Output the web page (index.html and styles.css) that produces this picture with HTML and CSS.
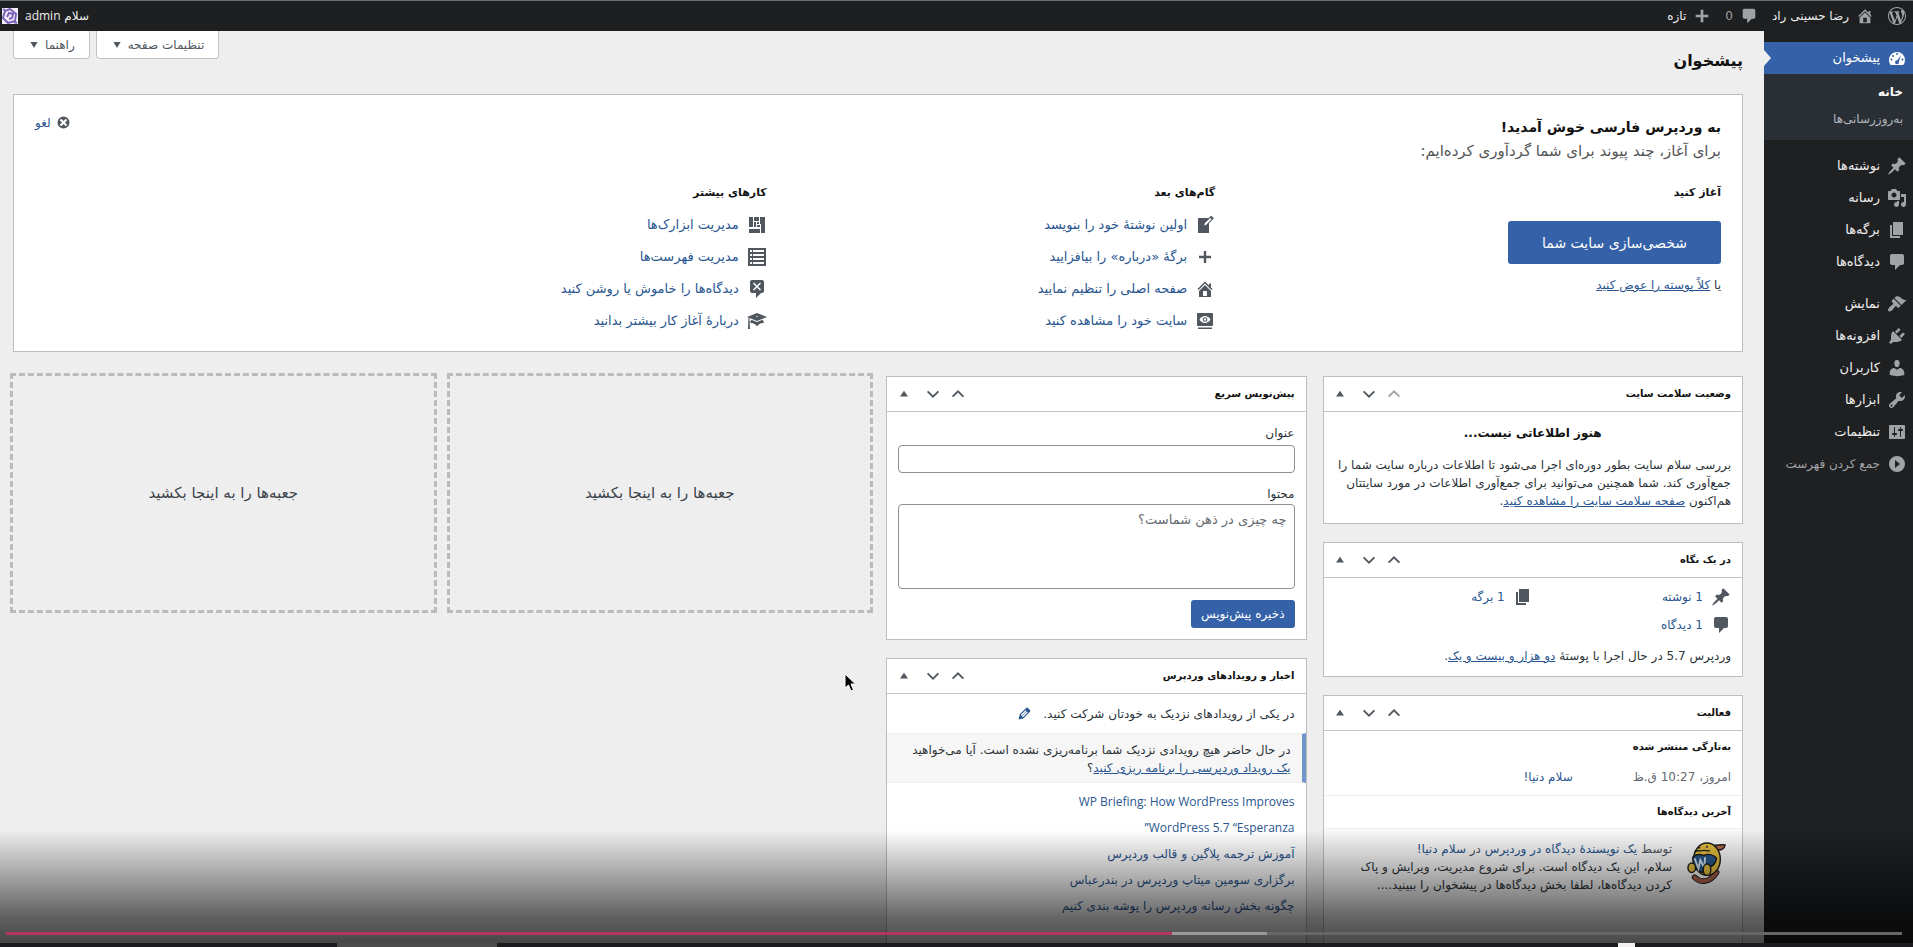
FILE: index.html
```html
<!DOCTYPE html>
<html lang="fa" dir="rtl">
<head>
<meta charset="utf-8">
<title>پیشخوان</title>
<link rel="stylesheet" href="styles.css">
</head>
<body>
<svg class="sprite" aria-hidden="true">
  <symbol id="i-wp" viewBox="0 0 20 20"><path d="M20 10c0-5.51-4.49-10-10-10C4.48 0 0 4.49 0 10c0 5.52 4.48 10 10 10 5.51 0 10-4.48 10-10zM7.78 15.37L4.37 6.22c.55-.02 1.17-.08 1.17-.08.5-.06.44-1.13-.06-1.11 0 0-1.45.11-2.37.11-.18 0-.37 0-.58-.01C4.12 2.69 6.87 1.11 10 1.11c2.33 0 4.45.87 6.05 2.34-.68-.11-1.65.39-1.65 1.58 0 .74.45 1.36.9 2.1.35.61.55 1.36.55 2.46 0 1.49-1.4 5-1.4 5l-3.03-8.37c.54-.02.82-.17.82-.17.5-.05.44-1.25-.06-1.22 0 0-1.44.12-2.38.12-.87 0-2.33-.12-2.33-.12-.5-.03-.56 1.2-.06 1.22l.92.08 1.26 3.41zM17.41 10c.24-.64.74-1.87.43-4.25.7 1.29 1.05 2.71 1.05 4.25 0 3.29-1.73 6.24-4.4 7.78.97-2.59 1.94-5.2 2.92-7.78zM6.1 18.09C3.12 16.65 1.11 13.53 1.11 10c0-1.3.23-2.48.72-3.59C3.25 10.3 4.67 14.2 6.1 18.09zm4.03-6.63l2.58 6.98c-.86.29-1.76.45-2.71.45-.79 0-1.57-.11-2.29-.33.81-2.38 1.62-4.74 2.42-7.1z"/></symbol>
  <symbol id="i-home" viewBox="0 0 20 20"><path fill-rule="evenodd" d="M16 8.5l1.53 1.53-1.06 1.06L10 4.6l-6.47 6.49-1.06-1.06L10 2.5l4 4v-2h2v4zm-6-2.46l6 5.99V18H4v-5.97zM12 17v-5H8v5h4z"/></symbol>
  <symbol id="i-comment" viewBox="0 0 20 20"><path d="M5 2h10c1.100 0 2 .9 2 2v7c0 1.100-.9 2-2 2h-2l-5 5v-5H5c-1.100 0-2-.9-2-2V4c0-1.100.9-2 2-2z"/></symbol>
  <symbol id="i-plus" viewBox="0 0 20 20"><path d="M17 8.500v3h-5.500v5.500h-3v-5.500H3v-3h5.500V3h3v5.500z"/></symbol>
  <symbol id="i-dash" viewBox="0 0 20 20"><path fill-rule="evenodd" d="M3.760 17h12.480A7.940 7.940 0 0 0 18 12a8 8 0 1 0-16 0c0 1.900.66 3.650 1.760 5zM10 5a1 1 0 1 1 0 2 1 1 0 0 1 0-2zM6 7a1 1 0 1 1 0 2 1 1 0 0 1 0-2zM4.500 10.500a1 1 0 1 1 0 2 1 1 0 0 1 0-2zM15.500 10.500a1 1 0 1 1 0 2 1 1 0 0 1 0-2zM13.900 7.100l-2 6.300c.1.300.100.500.100.800a2 2 0 1 1-1.600-2z"/></symbol>
  <symbol id="i-pin" viewBox="0 0 20 20"><path d="M10.44 3.02l1.82-1.82 6.36 6.35-1.83 1.82c-1.05-.68-2.48-.57-3.41.36l-.75.75c-.92.93-1.04 2.35-.35 3.41l-1.83 1.82-2.41-2.41-2.8 2.79c-.42.42-3.38 2.71-3.8 2.29s1.86-3.39 2.28-3.81l2.79-2.79L4.1 9.36l1.83-1.82c1.05.69 2.48.57 3.4-.36l.75-.75c.93-.92 1.05-2.35.36-3.41z"/></symbol>
  <symbol id="i-media" viewBox="0 0 20 20"><path fill-rule="evenodd" d="M13 11V4c0-.55-.45-1-1-1h-1.67L9 1H5L3.67 3H2c-.55 0-1 .45-1 1v7c0 .55.45 1 1 1h10c.55 0 1-.45 1-1zM7 4.500c1.380 0 2.500 1.120 2.500 2.500S8.380 9.500 7 9.500 4.500 8.380 4.500 7 5.620 4.500 7 4.500zM14 6h5v10.500c0 1.380-1.120 2.500-2.500 2.500S14 17.880 14 16.500s1.120-2.500 2.500-2.500c.17 0 .34.02.5.05V9h-3V6zm-4 8.050V13h2v3.500c0 1.380-1.120 2.500-2.500 2.500S7 17.880 7 16.500 8.120 14 9.500 14c.17 0 .34.02.5.05z"/></symbol>
  <symbol id="i-page" viewBox="0 0 20 20"><path d="M6 15V2h10v13H6zm-1 1h8v2H3V5h2v11z"/></symbol>
  <symbol id="i-brush" viewBox="0 0 20 20"><path d="M14.480 11.060L7.410 3.990l1.500-1.500c.5-.56 2.300-.47 3.510.32 1.210.8 1.430 1.280 2.910 2.100 1.180.64 2.450 1.260 4.450.85zm-.71.71L6.700 4.700 4.930 6.470c-.39.39-.39 1.020 0 1.410l1.060 1.060c.39.39.39 1.030 0 1.420-.6.6-1.430 1.110-2.210 1.690-.35.26-.7.53-1.010.84C1.430 14.230.4 16.080 1.400 17.070c.99 1 2.840-.03 4.180-1.360.31-.31.58-.66.85-1.020.57-.78 1.080-1.610 1.690-2.210.39-.39 1.020-.39 1.410 0l1.060 1.060c.39.39 1.020.39 1.410 0z"/></symbol>
  <symbol id="i-plug" viewBox="0 0 20 20"><path d="M13.110 4.360L9.870 7.600 8 5.730l3.240-3.240c.35-.34 1.050-.2 1.560.32.52.51.66 1.210.31 1.550zm-8 1.770l.91-1.120 9.010 9.010-1.190.84c-.71.71-2.630 1.160-3.820 1.160H6.140L4.900 17.260c-.59.59-1.540.59-2.120 0-.59-.58-.59-1.530 0-2.120l1.240-1.240v-3.880c0-1.130.4-3.190 1.090-3.890zm7.260 3.970l3.240-3.240c.34-.35 1.040-.21 1.550.31.52.51.66 1.210.31 1.550l-3.240 3.250z"/></symbol>
  <symbol id="i-user" viewBox="0 0 20 20"><path d="M10 9.250c-2.270 0-2.730-3.440-2.730-3.440C7 4.020 7.820 2 9.970 2c2.160 0 2.980 2.020 2.710 3.810 0 0-.41 3.440-2.680 3.440zm0 2.570L12.720 10c2.390 0 4.520 2.330 4.520 4.530v2.490s-3.650 1.130-7.240 1.130c-3.650 0-7.240-1.130-7.240-1.130v-2.490c0-2.250 1.940-4.480 4.470-4.480z"/></symbol>
  <symbol id="i-tool" viewBox="0 0 20 20"><path fill-rule="evenodd" d="M16.680 9.770c-1.340 1.340-3.300 1.670-4.950.99l-5.410 6.520c-.99.99-2.590.99-3.580 0s-.99-2.590 0-3.570l6.520-5.420c-.68-1.650-.35-3.610.99-4.950 1.280-1.280 3.120-1.620 4.720-1.060l-2.890 2.890 2.820 2.820 2.860-2.870c.53 1.580.18 3.390-1.080 4.650zM3.810 16.210c.4.39 1.040.39 1.430 0 .4-.4.4-1.040 0-1.430-.39-.4-1.030-.4-1.430 0-.39.39-.39 1.030 0 1.430z"/></symbol>
  <symbol id="i-settings" viewBox="0 0 20 20"><path fill-rule="evenodd" d="M18 16V4c0-.55-.45-1-1-1H3c-.55 0-1 .45-1 1v12c0 .55.45 1 1 1h14c.55 0 1-.45 1-1zM8 11h1c.55 0 1 .45 1 1s-.45 1-1 1H8v1.500c0 .28-.22.5-.5.5s-.5-.22-.5-.5V13H6c-.55 0-1-.45-1-1s.45-1 1-1h1V5.500c0-.28.22-.5.5-.5s.5.22.5.5V11zm5-2h-1c-.55 0-1-.45-1-1s.45-1 1-1h1V5.500c0-.28.22-.5.5-.5s.5.22.5.5V7h1c.55 0 1 .45 1 1s-.45 1-1 1h-1v5.500c0 .28-.22.5-.5.5s-.5-.22-.5-.5V9z"/></symbol>
  <symbol id="i-collapse" viewBox="0 0 20 20"><path fill-rule="evenodd" d="M10 2a8 8 0 1 1 0 16 8 8 0 0 1 0-16zM8 6v8l5-4z"/></symbol>
  <symbol id="i-write" viewBox="0 0 20 20"><path fill-rule="evenodd" d="M16.890 1.200l1.410 1.410c.39.39.39 1.020 0 1.410L14 8.330V18H3V3h10.670l1.800-1.800c.4-.39 1.030-.4 1.420 0zm-5.660 8.480l5.370-5.360-1.420-1.420-5.360 5.370-.71 2.120z"/></symbol>
  <symbol id="i-add" viewBox="0 0 20 20"><path d="M16 8.800v2.400h-4.800V16H8.800v-4.800H4V8.800h4.800V4h2.400v4.800z"/></symbol>
  <symbol id="i-view" viewBox="0 0 20 20"><path fill-rule="evenodd" d="M18 14V3c0-.55-.45-1-1-1H3c-.55 0-1 .45-1 1v11c0 .55.45 1 1 1h14c.55 0 1-.45 1-1zM10 5c2.300 0 4.400 1.300 5.500 3.500C14.400 10.700 12.300 12 10 12s-4.400-1.300-5.500-3.500C5.600 6.300 7.700 5 10 5zm0 1.200a2.300 2.300 0 1 0 0 4.600 2.300 2.300 0 0 0 0-4.600zM10 7.300a1.200 1.200 0 1 1 0 2.400 1.200 1.200 0 0 1 0-2.400zM3 16.500h14V18H3z"/></symbol>
  <symbol id="i-widgets" viewBox="0 0 20 20"><path fill-rule="evenodd" d="M2 2h4v10H2zM7 2h5v4H7zM13 2h5v16h-4V9h-1zM7 7h2v5H7zM10 7h2v2h-2zM10 10h3v2h-3zM2 14h11v4H2z"/></symbol>
  <symbol id="i-menus" viewBox="0 0 20 20"><path fill-rule="evenodd" d="M1 1h18v18H1zM3 3v2h2V3zM6 3v2h11V3zM3 7v2h2V7zM6 7v2h11V7zM3 11v2h2v-2zM6 11v2h11v-2zM3 15v2h2v-2zM6 15v2h11v-2z"/></symbol>
  <symbol id="i-nocomment" viewBox="0 0 20 20"><path fill-rule="evenodd" d="M5 1h10c1.100 0 2 .9 2 2v9c0 1.100-.9 2-2 2h-1l-5 5v-5H5c-1.100 0-2-.9-2-2V3c0-1.100.9-2 2-2zM7 3.500L6 4.500l3 3-3 3 1 1 3-3 3 3 1-1-3-3 3-3-1-1-3 3z"/></symbol>
  <symbol id="i-learn" viewBox="0 0 20 20"><path fill-rule="evenodd" d="M10 10L2.540 7.020 3 18H1l.48-11.410L0 6l10-4 10 4zm0-5c-.55 0-1 .22-1 .5s.45.5 1 .5 1-.22 1-.5-.45-.5-1-.5zm0 6l5.570-2.230c.71.94 1.200 2.070 1.360 3.300-.3-.04-.61-.07-.93-.07-2.550 0-4.780 1.370-6 3.410C8.780 13.370 6.550 12 4 12c-.32 0-.63.03-.93.07.16-1.230.65-2.360 1.360-3.300z"/></symbol>
  <symbol id="i-dismiss" viewBox="0 0 20 20"><path fill-rule="evenodd" d="M10 2a8 8 0 1 1 0 16 8 8 0 0 1 0-16zM7 5L5 7l3 3-3 3 2 2 3-3 3 3 2-2-3-3 3-3-2-2-3 3z"/></symbol>
  <symbol id="i-edit" viewBox="0 0 20 20"><path fill-rule="evenodd" d="M13.890 3.390l2.710 2.720c.46.46.42 1.240.03 1.640l-8.010 8.020-5.560 1.160 1.160-5.580s7.600-7.630 7.990-8.030c.39-.39 1.220-.39 1.680.07zm-2.730 2.790l-5.590 5.610 1.110 1.110 5.540-5.650zm-2.970 8.230l5.580-5.600-1.070-1.080-5.590 5.600z"/></symbol>
  <symbol id="i-up" viewBox="0 0 20 20"><path fill="none" stroke="currentColor" stroke-width="2" d="M4 13l6-6 6 6"/></symbol>
  <symbol id="i-down" viewBox="0 0 20 20"><path fill="none" stroke="currentColor" stroke-width="2" d="M4 7l6 6 6-6"/></symbol>
  <symbol id="i-toggle" viewBox="0 0 20 20"><path d="M5 13l5-7 5 7z"/></symbol>
  <symbol id="i-caret" viewBox="0 0 20 20"><path d="M4 5h12l-6 10z"/></symbol>
</svg>

<header class="adminbar">
  <a class="bar-item" href="#" aria-label="وردپرس"><svg class="icon"><use href="#i-wp"/></svg></a>
  <a class="bar-item" href="#"><svg class="icon"><use href="#i-home"/></svg>رضا حسینی راد</a>
  <a class="bar-item bar-count" href="#"><svg class="icon"><use href="#i-comment"/></svg>0</a>
  <a class="bar-item" href="#"><svg class="icon"><use href="#i-plus"/></svg>تازه</a>
  <a class="bar-item bar-user" href="#"><span>سلام <span class="latin">admin</span></span>
    <svg class="avatar" viewBox="0 0 16 16"><rect width="16" height="16" fill="#f3effb"/><path fill="none" stroke="#7a62b8" stroke-width="2" d="M8 1l6 5-1 7-7 2-5-5 2-7zM5 9l2-4 4 1-1 4-3 1M1 1l3 2M12 14l3 1"/></svg>
  </a>
</header>

<div class="shell">
  <nav class="menu" aria-label="فهرست">
    <a class="menu-item current" href="#"><svg class="icon"><use href="#i-dash"/></svg>پیشخوان</a>
    <div class="submenu">
      <a class="active" href="#">خانه</a>
      <a href="#">به‌روزرسانی‌ها</a>
    </div>
    <div class="menu-group">
      <a class="menu-item" href="#"><svg class="icon"><use href="#i-pin"/></svg>نوشته‌ها</a>
      <a class="menu-item" href="#"><svg class="icon"><use href="#i-media"/></svg>رسانه</a>
      <a class="menu-item" href="#"><svg class="icon"><use href="#i-page"/></svg>برگه‌ها</a>
      <a class="menu-item" href="#"><svg class="icon"><use href="#i-comment"/></svg>دیدگاه‌ها</a>
    </div>
    <div class="menu-group">
      <a class="menu-item" href="#"><svg class="icon"><use href="#i-brush"/></svg>نمایش</a>
      <a class="menu-item" href="#"><svg class="icon"><use href="#i-plug"/></svg>افزونه‌ها</a>
      <a class="menu-item" href="#"><svg class="icon"><use href="#i-user"/></svg>کاربران</a>
      <a class="menu-item" href="#"><svg class="icon"><use href="#i-tool"/></svg>ابزارها</a>
      <a class="menu-item" href="#"><svg class="icon"><use href="#i-settings"/></svg>تنظیمات</a>
      <button class="menu-item collapse" type="button"><svg class="icon"><use href="#i-collapse"/></svg>جمع کردن فهرست</button>
    </div>
  </nav>

  <main class="content">
    <div class="page-head">
      <h1>پیشخوان</h1>
      <div class="tabs">
        <button type="button">تنظیمات صفحه<svg><use href="#i-caret"/></svg></button>
        <button type="button">راهنما<svg><use href="#i-caret"/></svg></button>
      </div>
    </div>

    <section class="welcome">
      <div class="welcome-head">
        <div>
          <h2>به وردپرس فارسی خوش آمدید!</h2>
          <p>برای آغاز، چند پیوند برای شما گردآوری کرده‌ایم:</p>
        </div>
        <a class="dismiss" href="#"><svg><use href="#i-dismiss"/></svg>لغو</a>
      </div>
      <div class="welcome-cols">
        <div class="start">
          <h3>آغاز کنید</h3>
          <button class="hero" type="button">شخصی‌سازی سایت شما</button>
          <p>یا <a href="#">کلاً پوسته را عوض کنید</a></p>
        </div>
        <div>
          <h3>گام‌های بعد</h3>
          <ul>
            <li><svg class="icon"><use href="#i-write"/></svg><a href="#">اولین نوشتهٔ خود را بنویسد</a></li>
            <li><svg class="icon"><use href="#i-add"/></svg><a href="#">برگهٔ «درباره» را بیافزایید</a></li>
            <li><svg class="icon"><use href="#i-home"/></svg><a href="#">صفحه اصلی را تنظیم نمایید</a></li>
            <li><svg class="icon"><use href="#i-view"/></svg><a href="#">سایت خود را مشاهده کنید</a></li>
          </ul>
        </div>
        <div>
          <h3>کارهای بیشتر</h3>
          <ul>
            <li><svg class="icon"><use href="#i-widgets"/></svg><a href="#">مدیریت ابزارک‌ها</a></li>
            <li><svg class="icon"><use href="#i-menus"/></svg><a href="#">مدیریت فهرست‌ها</a></li>
            <li><svg class="icon"><use href="#i-nocomment"/></svg><a href="#">دیدگاه‌ها را خاموش یا روشن کنید</a></li>
            <li><svg class="icon"><use href="#i-learn"/></svg><a href="#">دربارهٔ آغاز کار بیشتر بدانید</a></li>
          </ul>
        </div>
      </div>
    </section>

    <div class="widgets">
      <div class="column">
        <section class="box">
          <header class="box-head"><h2>وضعیت سلامت سایت</h2>
            <button class="dim" type="button" aria-label="بالا"><svg><use href="#i-up"/></svg></button><button type="button" aria-label="پایین"><svg><use href="#i-down"/></svg></button><button class="toggle" type="button" aria-label="بستن"><svg><use href="#i-toggle"/></svg></button></header>
          <div class="box-body health">
            <h3>هنوز اطلاعاتی نیست...</h3>
            <p>بررسی سلام سایت بطور دوره‌ای اجرا می‌شود تا اطلاعات درباره سایت شما را جمع‌آوری کند. شما همچنین می‌توانید برای جمع‌آوری اطلاعات در مورد سایتتان هم‌اکنون <a href="#">صفحه سلامت سایت را مشاهده کنید</a>.</p>
          </div>
        </section>
        <section class="box">
          <header class="box-head"><h2>در یک نگاه</h2>
            <button type="button" aria-label="بالا"><svg><use href="#i-up"/></svg></button><button type="button" aria-label="پایین"><svg><use href="#i-down"/></svg></button><button class="toggle" type="button" aria-label="بستن"><svg><use href="#i-toggle"/></svg></button></header>
          <div class="box-body glance">
            <ul>
              <li><svg class="icon"><use href="#i-pin"/></svg><a href="#">1 نوشته</a></li>
              <li><svg class="icon"><use href="#i-page"/></svg><a href="#">1 برگه</a></li>
              <li><svg class="icon"><use href="#i-comment"/></svg><a href="#">1 دیدگاه</a></li>
            </ul>
            <p>وردپرس 5.7 در حال اجرا با پوستهٔ <a href="#">دو هزار و بیست و یک</a>.</p>
          </div>
        </section>
        <section class="box">
          <header class="box-head"><h2>فعالیت</h2>
            <button type="button" aria-label="بالا"><svg><use href="#i-up"/></svg></button><button type="button" aria-label="پایین"><svg><use href="#i-down"/></svg></button><button class="toggle" type="button" aria-label="بستن"><svg><use href="#i-toggle"/></svg></button></header>
          <div class="activity">
            <h3>به‌تازگی منتشر شده</h3>
            <div class="published"><span>امروز، 10:27 ق.ظ</span><a href="#">سلام دنیا!</a></div>
            <h3 class="ruled">آخرین دیدگاه‌ها</h3>
            <div class="reply">
              <svg class="wapuu" viewBox="0 0 42 46">
                <path fill="none" stroke="#1d1d1d" stroke-width="6" stroke-linecap="round" d="M8 38c6 6 16 6 23-5"/>
                <path fill="none" stroke="#a8604a" stroke-width="4" stroke-linecap="round" d="M8 38c6 6 16 6 23-5"/>
                <path fill="#b56a4c" stroke="#1d1d1d" stroke-width="1.500" d="M24 5c5 0 10-2 16-1-1 5-6 6-11 5z"/>
                <ellipse cx="21" cy="19" rx="14" ry="17" fill="#e3bd3e" stroke="#1d1d1d" stroke-width="1.500"/>
                <path fill="#28598a" stroke="#1d1d1d" stroke-width="1.500" d="M6 17c4-4 8-3 12-2 4-2 10-1 13 3-1 5-3 8-7 9l-4 6c-8 1-14-6-14-16z"/>
                <path fill="none" stroke="#d7e4ef" stroke-width="2" d="M8 18l4 11 2-9 4 8 1-11"/>
                <ellipse cx="5" cy="28" rx="4" ry="5" fill="#e3bd3e" stroke="#1d1d1d" stroke-width="1.500"/>
                <ellipse cx="21" cy="30" rx="4" ry="6" fill="#e3bd3e" stroke="#1d1d1d" stroke-width="1.500"/>
                <path fill="none" stroke="#1d1d1d" stroke-width="1.500" d="M8 11c3-2 5 0 8-1s5 1 8 0M13 6v2M21 5v2"/>
              </svg>
              <div>
                <p class="by">توسط <a href="#">یک نویسندهٔ دیدگاه در وردپرس</a> در <a href="#">سلام دنیا!</a></p>
                <p>سلام، این یک دیدگاه است. برای شروع مدیریت، ویرایش و پاک کردن دیدگاه‌ها، لطفا بخش دیدگاه‌ها در پیشخوان را ببینید....</p>
              </div>
            </div>
          </div>
        </section>
      </div>

      <div class="column">
        <section class="box">
          <header class="box-head"><h2>پیش‌نویس سریع</h2>
            <button type="button" aria-label="بالا"><svg><use href="#i-up"/></svg></button><button type="button" aria-label="پایین"><svg><use href="#i-down"/></svg></button><button class="toggle" type="button" aria-label="بستن"><svg><use href="#i-toggle"/></svg></button></header>
          <form class="box-body draft">
            <label for="title">عنوان</label>
            <input id="title" type="text">
            <label for="body">محتوا</label>
            <textarea id="body" placeholder="چه چیزی در ذهن شماست؟"></textarea>
            <button class="primary" type="button">ذخیره پیش‌نویس</button>
          </form>
        </section>
        <section class="box">
          <header class="box-head"><h2>اخبار و رویدادهای وردپرس</h2>
            <button type="button" aria-label="بالا"><svg><use href="#i-up"/></svg></button><button type="button" aria-label="پایین"><svg><use href="#i-down"/></svg></button><button class="toggle" type="button" aria-label="بستن"><svg><use href="#i-toggle"/></svg></button></header>
          <p class="attend">در یکی از رویدادهای نزدیک به خودتان شرکت کنید. <a href="#" aria-label="ویرایش"><svg><use href="#i-edit"/></svg></a></p>
          <p class="notice">در حال حاضر هیچ رویدادی نزدیک شما برنامه‌ریزی نشده است. آیا می‌خواهید <a href="#">یک رویداد وردپرسی را برنامه ریزی کنید</a>؟</p>
          <ul class="news">
            <li class="latin"><a href="#">WP Briefing: How WordPress Improves</a></li>
            <li class="latin"><a href="#">WordPress 5.7 “Esperanza”</a></li>
            <li><a href="#">آموزش ترجمه پلاگین و قالب وردپرس</a></li>
            <li><a href="#">برگزاری سومین میتاپ وردپرس در بندرعباس</a></li>
            <li><a href="#">چگونه بخش رسانه وردپرس را پوشه بندی کنیم</a></li>
          </ul>
        </section>
      </div>
      <div class="drop">جعبه‌ها را به اینجا بکشید</div>
      <div class="drop">جعبه‌ها را به اینجا بکشید</div>
    </div>
  </main>
</div>

<svg class="pointer" viewBox="0 0 12 19" aria-hidden="true"><path fill="#000" stroke="#fff" d="M1 1v14l3.500-3 2.500 6 2.500-1L7 11h4.500z"/></svg>

<div class="player">
  <div class="track"><span class="played"></span><span class="loaded"></span><span class="rest"></span></div>
  <div class="strip"><span class="strip-tab"></span><span class="strip-mark"></span></div>
</div>
</body>
</html>
```
FILE: styles.css
```css
* { box-sizing: border-box; }
html, body { height: 100%; }
body {
  margin: 0;
  display: flex;
  flex-direction: column;
  overflow: hidden;
  background: #eee;
  color: #2c3338;
  font: 12px/18px "DejaVu Sans", sans-serif;
}
h1, h2, h3, p, ul { margin: 0; padding: 0; }
ul { list-style: none; }
a { color: #2a5690; }
button, input, textarea { font: inherit; color: inherit; }
button { border: 0; background: none; padding: 0; }
svg { fill: currentColor; flex: none; }
.sprite { position: absolute; width: 0; height: 0; }
.icon { width: 20px; height: 20px; }
.latin { font-family: "Open Sans", "Noto Sans", sans-serif; }
h1, h2, h3 { color: #111; font-weight: 700; }

.adminbar {
  display: flex;
  align-items: center;
  flex: none;
  height: 31px;
  padding: 0 7px 0 2px;
  gap: 14px;
  background: #1d1f21;
  border-top: 1px solid #6d7372;
}
.bar-item { display: flex; align-items: center; gap: 7px; color: #eee; text-decoration: none; }
.bar-item .icon { width: 18px; height: 18px; color: #a0a3a6; }
.bar-item.bar-count { color: #a0a3a6; }
.bar-user { margin-right: auto; }
.avatar { width: 16px; height: 16px; }

.shell { display: flex; flex: 1; align-items: stretch; min-height: 0; }
.menu { flex: 0 0 149px; padding-top: 11px; background: #1e2022; }
.menu-item {
  display: flex;
  align-items: center;
  gap: 7px;
  width: 100%;
  height: 32px;
  padding-right: 6px;
  color: #eee;
  font-size: 13px;
  text-decoration: none;
}
.menu-item .icon { color: #a0a3a6; }
.menu-item.current { position: relative; background: #3461a8; color: #fff; }
.menu-item.current .icon { color: #fff; }
.menu-item.current::after {
  content: "";
  position: absolute;
  right: 100%;
  top: 8px;
  margin-right: -7px;
  border: 8px solid transparent;
  border-left: 7px solid #eee;
  border-right: 0;
}
.menu-item.collapse { color: #a0a3a6; font-size: 12px; }
.submenu { display: flex; flex-direction: column; padding: 5px 10px 7px; background: #2a2f36; }
.submenu a { color: #b4b8bc; line-height: 27px; text-decoration: none; }
.submenu a.active { color: #fff; font-weight: 700; }
.menu-group { padding-top: 10px; }

.content { flex: 1; min-width: 0; padding: 0 21px 0 13px; }
.page-head { display: flex; justify-content: space-between; align-items: flex-start; height: 63px; }
h1 { padding-top: 14px; font-size: 16px; line-height: 32px; }
.tabs { display: flex; gap: 6px; }
.tabs button {
  display: flex;
  align-items: center;
  gap: 5px;
  height: 28px;
  padding: 0 14px;
  background: #fff;
  border: 1px solid #c3c4c7;
  border-top: 0;
  border-radius: 0 0 4px 4px;
  color: #50575e;
}
.tabs svg { width: 12px; height: 12px; }

.welcome { padding: 20px 21px 14px; background: #fff; border: 1px solid #bcbec0; }
.welcome-head { display: flex; justify-content: space-between; align-items: flex-start; }
.welcome-head h2 { font-size: 14px; line-height: 24px; }
.welcome-head p { color: #555; font-size: 15px; line-height: 24px; }
.dismiss { display: flex; align-items: center; gap: 5px; line-height: 12px; text-decoration: none; }
.dismiss svg { width: 15px; height: 15px; color: #50575e; }
.welcome-cols { display: grid; grid-template-columns: 300fr 266fr 434fr; padding-top: 20px; }
.welcome-cols h3 { font-size: 11px; line-height: 20px; margin-bottom: 6px; }
.welcome-cols li { display: flex; align-items: center; gap: 8px; height: 32px; }
.welcome-cols li a { font-size: 13px; text-decoration: none; }
.welcome-cols .icon { color: #50575e; }
.hero {
  display: block;
  margin-top: 18px;
  height: 43px;
  padding: 0 34px;
  border-radius: 3px;
  background: #3461a8;
  color: #fff;
  font-size: 14px;
}
.start p { padding-top: 12px; }

.widgets { display: grid; grid-template-columns: repeat(4, 1fr); gap: 16px; align-items: start; padding-top: 24px; }
.column { display: flex; flex-direction: column; gap: 18px; }
.box { background: #fff; border: 1px solid #bcbec0; }
.box-head { display: flex; align-items: center; height: 35px; padding-right: 11px; border-bottom: 1px solid #c3c4c7; }
.box-head h2 { flex: 1; font-size: 10px; line-height: 18px; }
.box-head button { display: flex; align-items: center; justify-content: center; width: 25px; height: 26px; color: #50575e; }
.box-head button.dim { color: #a0a3a6; }
.box-head .toggle { width: 33px; }
.box-head svg { width: 18px; height: 18px; }
.box-head .toggle svg { width: 16px; height: 16px; }
.box-body { padding: 11px; }
.health { padding-bottom: 13px; }
.health h3 { text-align: center; font-size: 12px; line-height: 20px; margin-bottom: 13px; }
.glance { padding: 5px 11px 11px; }
.glance ul { display: grid; grid-template-columns: 1fr 1fr; }
.glance li { display: flex; align-items: center; gap: 8px; height: 28px; }
.glance li a { text-decoration: none; }
.glance .icon { color: #50575e; }
.glance p { padding-top: 8px; }
.activity h3 { padding: 0 11px; font-size: 10px; line-height: 32px; }
.published { display: flex; gap: 60px; padding: 5px 11px 9px; color: #646970; }
.published a, .reply a { text-decoration: none; }
.activity .ruled { border-top: 1px solid #eee; border-bottom: 1px solid #eee; }
.reply { display: flex; gap: 15px; padding: 11px 15px 80px 20px; background: #f9f9f9; }
.reply .by { color: #50575e; }
.wapuu { width: 40px; height: 46px; }

.draft { display: flex; flex-direction: column; align-items: flex-start; }
.draft label { line-height: 20px; }
.draft input, .draft textarea { width: 100%; border: 1px solid #8c8f94; border-radius: 4px; background: #fff; }
.draft input { height: 28px; margin: 2px 0 11px; }
.draft textarea { height: 85px; margin-bottom: 11px; padding: 5px 7px; resize: none; font-size: 13px; line-height: 20px; }
.draft textarea::placeholder { color: #646970; opacity: 1; }
.primary { height: 28px; padding: 0 10px; border-radius: 3px; background: #3461a8; color: #fff; }
.attend { display: flex; align-items: center; gap: 10px; height: 39px; padding: 0 11px; }
.attend svg { display: block; width: 17px; height: 17px; }
.notice { padding: 7px 11px 5px; background: #f6f6f6; border: 1px solid #eee; border-width: 1px 0; border-right: 4px solid #7295cc; }
.news { padding: 6px 11px 80px; }
.news li { height: 26px; line-height: 26px; }
.news a { text-decoration: none; }
.drop {
  display: flex;
  align-items: center;
  justify-content: center;
  height: 234px;
  outline: 3px dashed #bbb;
  color: #3c434a;
  font-size: 15px;
}

.pointer { position: absolute; left: 844px; top: 673px; width: 12px; height: 19px; }
.player {
  position: fixed;
  inset: auto 0 0 0;
  display: flex;
  flex-direction: column;
  justify-content: flex-end;
  height: 117px;
  direction: ltr;
  background: linear-gradient(rgba(0, 0, 0, 0), rgba(0, 0, 0, .28) 35%, rgba(0, 0, 0, .6) 75%, rgba(0, 0, 0, .72));
}
.track { display: flex; height: 3px; margin: 0 11px 8px 6px; }
.played { flex: 0 0 61.5%; background: #b23562; }
.loaded { flex: 0 0 5%; background: #999; }
.rest { flex: 1; background: #666; }
.strip { display: flex; height: 4px; background: #1c1c1e; }
.strip-tab { width: 8.4%; margin-left: 17.6%; background: #4b4b4b; }
.strip-mark { width: 17px; margin-left: 58.6%; background: #f2f0f0; }
```
